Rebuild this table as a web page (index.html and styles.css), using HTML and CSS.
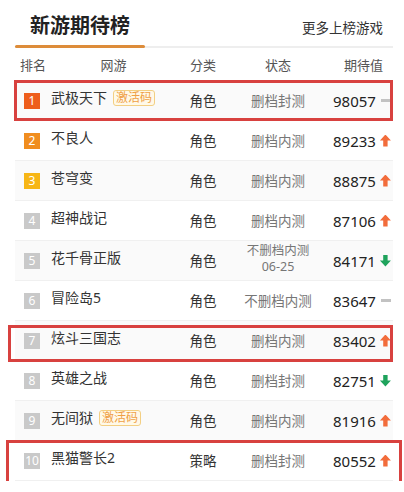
FILE: index.html
```html
<!DOCTYPE html>
<html lang="zh-CN">
<head>
    <meta charset="UTF-8">
    <title>新游期待榜</title>
    <link rel="stylesheet" href="styles.css">
</head>
<body>
    <div class="rank">
        <div class="top">
            <h2 class="title">新游期待榜</h2>
            <a class="more">更多上榜游戏</a>
        </div>
        <div class="row head">
            <span>排名</span>
            <span>网游</span>
            <span>分类</span>
            <span>状态</span>
            <span class="val">期待值</span>
        </div>
        <div class="row">
            <span><i class="no n1">1</i></span>
            <span class="name">武极天下<em class="tag">激活码</em></span>
            <span>角色</span>
            <span class="st">删档封测</span>
            <span class="val">98057<b class="flat"></b></span>
        </div>
        <div class="row">
            <span><i class="no n2">2</i></span>
            <span class="name">不良人</span>
            <span>角色</span>
            <span class="st">删档内测</span>
            <span class="val">89233<b class="up"></b></span>
        </div>
        <div class="row">
            <span><i class="no n3">3</i></span>
            <span class="name">苍穹变</span>
            <span>角色</span>
            <span class="st">删档内测</span>
            <span class="val">88875<b class="up"></b></span>
        </div>
        <div class="row">
            <span><i class="no">4</i></span>
            <span class="name">超神战记</span>
            <span>角色</span>
            <span class="st">删档内测</span>
            <span class="val">87106<b class="up"></b></span>
        </div>
        <div class="row">
            <span><i class="no">5</i></span>
            <span class="name">花千骨正版</span>
            <span>角色</span>
            <span class="st two">不删档内测<br>06-25</span>
            <span class="val">84171<b class="down"></b></span>
        </div>
        <div class="row">
            <span><i class="no">6</i></span>
            <span class="name">冒险岛5</span>
            <span>角色</span>
            <span class="st">不删档内测</span>
            <span class="val">83647<b class="flat"></b></span>
        </div>
        <div class="row">
            <span><i class="no">7</i></span>
            <span class="name">炫斗三国志</span>
            <span>角色</span>
            <span class="st">删档内测</span>
            <span class="val">83402<b class="up"></b></span>
        </div>
        <div class="row">
            <span><i class="no">8</i></span>
            <span class="name">英雄之战</span>
            <span>角色</span>
            <span class="st">删档封测</span>
            <span class="val">82751<b class="down"></b></span>
        </div>
        <div class="row">
            <span><i class="no">9</i></span>
            <span class="name">无间狱<em class="tag">激活码</em></span>
            <span>角色</span>
            <span class="st">删档内测</span>
            <span class="val">81916<b class="up"></b></span>
        </div>
        <div class="row">
            <span><i class="no">10</i></span>
            <span class="name">黑猫警长2</span>
            <span>策略</span>
            <span class="st">删档封测</span>
            <span class="val">80552<b class="up"></b></span>
        </div>
    </div>
    <div class="mark m1"></div>
    <div class="mark m7"></div>
    <div class="mark m10"></div>
</body>
</html>
```

FILE: styles.css
```css
body{
    margin: 0;
    background: #fff;
    font-family: "Noto Sans", "Noto Sans CJK SC", sans-serif;
    color: #333;
    position: relative;
}
.rank{width: 378px; margin-left: 15px;}
.top{display: flex; justify-content: space-between; align-items: center; height: 46px; border-bottom: 2px solid #eee; position: relative;}
.top::after{content: ""; position: absolute; left: 0; bottom: -2px; width: 130px; height: 3px; background: #dd8c3a; border-radius: 2px;}
.title{margin: 0; padding-left: 15px; padding-top: 6px; font-size: 20px; line-height: 28px; font-weight: bold; color: #222;}
.more{font-size: 13.5px; line-height: 20px; color: #333; padding-right: 10px; padding-top: 10px;}

.row{display: grid; box-sizing: border-box; grid-template-columns: 36px 125px 54px 96px 67px; align-items: center; height: 40px; border-bottom: 1px solid #f0f0f0; font-size: 13.5px; line-height: 18px;}
.row:nth-child(odd){background: #fafafa;}
.row span{text-align: center;}
.row .name{text-align: left; display: flex; align-items: center; padding-bottom: 6px; font-size: 14px; color: #333;}
.row .val{text-align: left; padding-left: 7px; display: flex; align-items: center; font-size: 15px; color: #222;}
.head{height: 33px; background: #fff !important; color: #555; font-size: 13px; border-bottom: none;}
.head span:nth-child(2){text-align: center; padding-bottom: 0;}
.head .val{padding-left: 18px; font-size: 13px; color: #555;}

.st{color: #767676; font-size: 13.5px;}
.st.two{font-size: 12.5px; line-height: 16px; padding-bottom: 4px;}

.no{display: inline-block; width: 16px; height: 16px; line-height: 16px; margin-left: 9px; float: left; font-style: normal; font-size: 12px; color: #fff; text-align: center; background: #c9c9c9;}
.no.n1{background: #ee5e1c;}
.no.n2{background: #f08d1f;}
.no.n3{background: #f7b616;}

.tag{font-style: normal; font-size: 12px; line-height: 14px; color: #efa046; background: #fff9e8; border: 1px solid #f3cf83; border-radius: 3px; padding: 0 2px; margin-left: 6px;}

.up, .down, .flat{display: inline-block; margin-left: 4px; width: 11px; height: 12px;}
.up{background: #f26c3b; clip-path: polygon(50% 0, 100% 50%, 70% 50%, 70% 100%, 30% 100%, 30% 50%, 0 50%);}
.down{background: #1fa35c; clip-path: polygon(30% 0, 70% 0, 70% 50%, 100% 50%, 50% 100%, 0 50%, 30% 50%);}
.flat{height: 3px; width: 10px; background: #c2c2c2; margin-left: 5px;}

.mark{position: absolute; border: 3px solid #d8413f;}
.m1{left: 14px; top: 80px; width: 373px; height: 35px;}
.m7{left: 8px; top: 325px; width: 379px; height: 31px;}
.m10{left: 6px; top: 440px; width: 390px; height: 43px;}
```
